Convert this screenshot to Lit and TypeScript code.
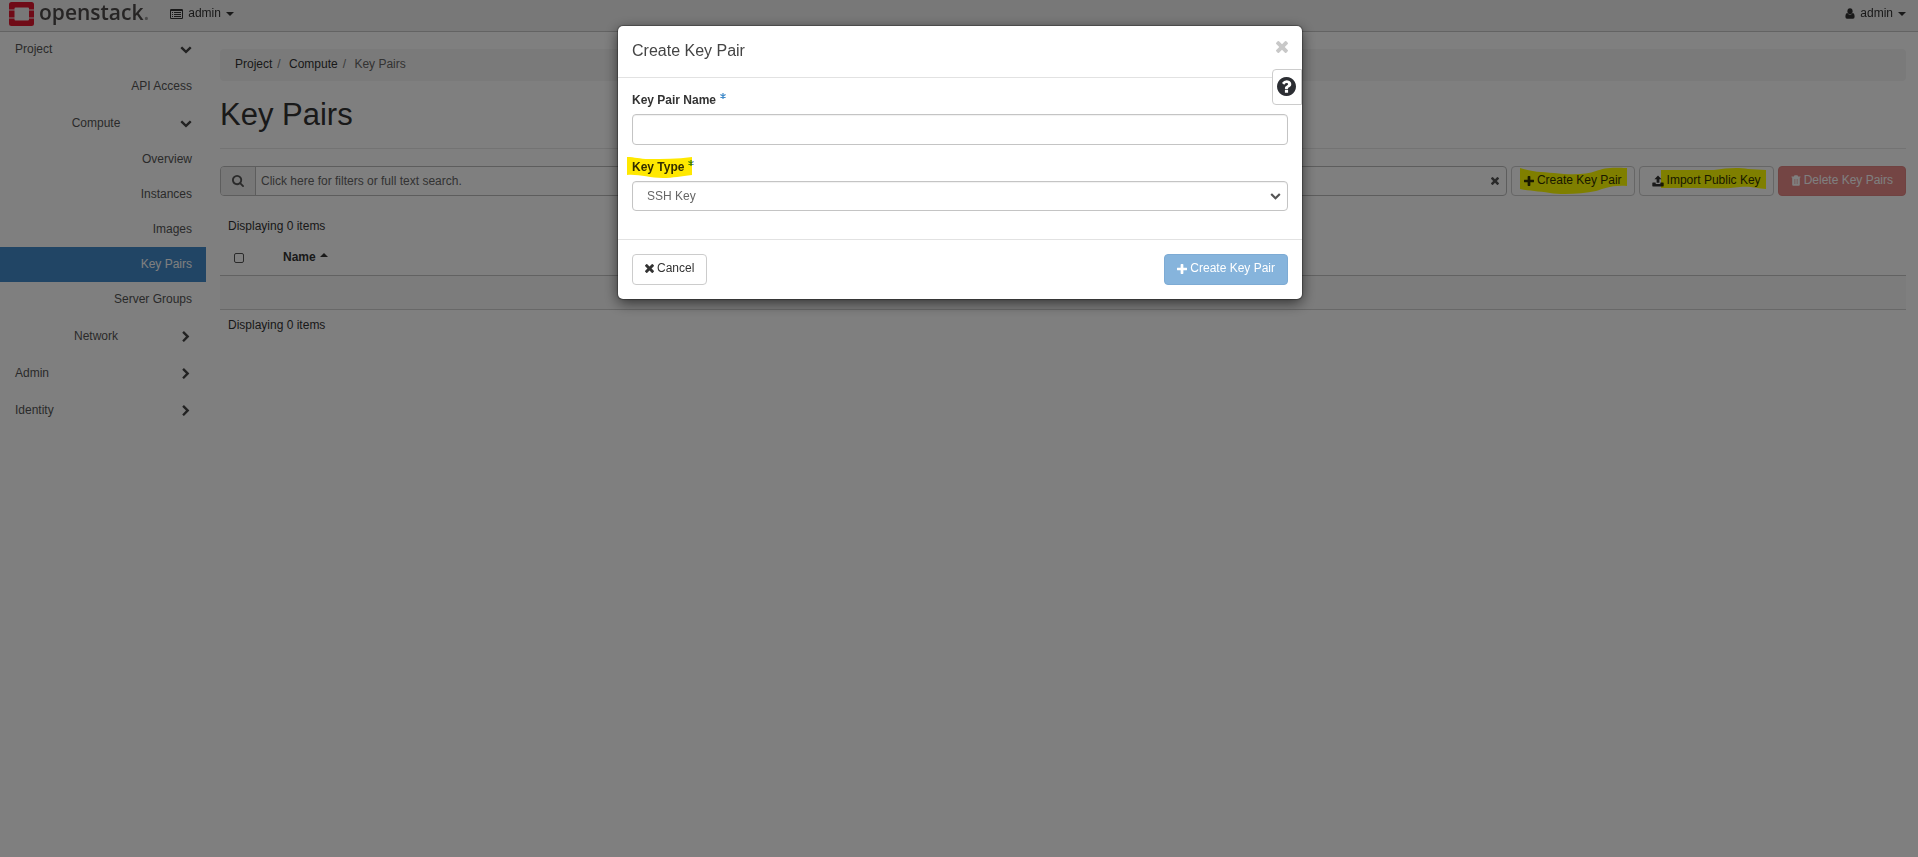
import { LitElement, html, css, svg, nothing } from "lit";
import { customElement, state } from "lit/decorators.js";

const ICONS: Record<string, { box: string; w: number; h: number; art: unknown }> = {
  plus: {
    box: "192 128 1408 1408", w: 10, h: 10,
    art: svg`<path d="M1600 736v192q0 40-28 68t-68 28h-416v416q0 40-28 68t-68 28h-192q-40 0-68-28t-28-68v-416h-416q-40 0-68-28t-28-68v-192q0-40 28-68t68-28h416v-416q0-40 28-68t68-28h192q40 0 68 28t28 68v416h416q40 0 68 28t28 68z"/>`,
  },
  times: {
    box: "302 366 1188 1188", w: 9, h: 9,
    art: svg`<path d="M1490 1322q0 40-28 68l-136 136q-28 28-68 28t-68-28l-294-294-294 294q-28 28-68 28t-68-28l-136-136q-28-28-28-68t28-68l294-294-294-294q-28-28-28-68t28-68l136-136q28-28 68-28t68 28l294 294 294-294q28-28 68-28t68 28l136 136q28 28 28 68t-28 68l-294 294 294 294q28 28 28 68z"/>`,
  },
  search: {
    box: "64 128 1664 1664", w: 12, h: 12,
    art: svg`<path d="M1216 832q0-185-131.500-316.500t-316.500-131.500-316.500 131.500-131.500 316.500 131.500 316.500 316.500 131.500 316.500-131.500 131.500-316.500zm512 832q0 52-38 90t-90 38q-54 0-90-38l-343-342q-179 124-399 124-143 0-273.500-55.500t-225-150-150-225-55.500-273.500 55.500-273.500 150-225 225-150 273.500-55.500 273.500 55.500 225 150 150 225 55.500 273.500q0 220-124 399l343 343q37 37 37 90z"/>`,
  },
  down: {
    box: "0 150 1792 1792", w: 12, h: 12,
    art: svg`<path d="M1683 808l-742 741q-19 19-45 19t-45-19l-742-741q-19-19-19-45.500t19-45.500l166-165q19-19 45-19t45 19l531 531 531-531q19-19 45-19t45 19l166 165q19 19 19 45.500t-19 45.500z"/>`,
  },
  right: {
    box: "0 0 1792 1792", w: 12, h: 12,
    art: svg`<path d="M1363 877l-742 742q-19 19-45 19t-45-19l-166-166q-19-19-19-45t19-45l531-531-531-531q-19-19-19-45t19-45l166-166q19-19 45-19t45 19l742 742q19 19 19 45t-19 45z"/>`,
  },
  question: {
    box: "128 128 1536 1536", w: 19, h: 19,
    art: svg`<path d="M1024 1376v-192q0-14-9-23t-23-9h-192q-14 0-23 9t-9 23v192q0 14 9 23t23 9h192q14 0 23-9t9-23zm256-672q0-88-55.500-163t-138.500-116-170-41q-243 0-371 213-15 24 8 42l132 100q7 6 19 6 16 0 25-12 53-68 86-92 34-24 86-24 48 0 85.500 26t37.500 59q0 38-20 61t-68 45q-63 28-115.500 86.500t-52.500 125.500v36q0 14 9 23t23 9h192q14 0 23-9t9-23q0-19 21.500-49.500t54.500-49.500q32-18 49-28.500t46-35 44.500-48 28-60.500 12.500-81zm384 192q0 209-103 385.500t-279.500 279.500-385.500 103-385.500-103-279.500-279.500-103-385.500 103-385.500 279.500-279.500 385.500-103 385.500 103 279.500 279.500 103 385.500z"/>`,
  },
  upload: {
    box: "0 0 12 12", w: 12, h: 12,
    art: svg`<path d="M6 .4l3.600 3.800H7.400v3.600H4.600V4.200H2.400z"/><path d="M.9 7.600h2.700v.6q0 .8.800.8h3.200q.8 0 .8-.8v-.6h2.700q.6 0 .6.600v2.600q0 .6-.6.600H.9q-.6 0-.6-.6V8.200q0-.6.600-.6z"/>`,
  },
  trash: {
    box: "0 0 9 11", w: 10, h: 11,
    art: svg`<path fill-rule="evenodd" d="M3 .3h3l.6 1.200H9v1H8.300V9.700q0 1-1 1H1.700q-1 0-1-1V2.500H0v-1h2.400zM2.600 4v5h.4V4zM4.300 4v5h.4V4zM6 4v5h.4V4z"/>`,
  },
  user: {
    box: "0 0 10 11", w: 10, h: 11,
    art: svg`<ellipse cx="5" cy="3.200" rx="2.600" ry="3"/><path d="M2.400 5q1 1.700 2.600 1.700T7.600 5Q9.600 5.200 9.600 8.800q0 1.900-1.600 1.900H2Q.4 10.700.4 8.800.4 5.200 2.400 5z"/>`,
  },
  list: {
    box: "0 0 13 10", w: 13, h: 10,
    art: svg`<path fill-rule="evenodd" d="M1.200 0h10.600Q13 0 13 1.200v7.600q0 1.200-1.200 1.200H1.200Q0 10 0 8.800V1.200Q0 0 1.200 0zM1 2v6.700q0 .3.300.3h10.400q.3 0 .3-.3V2z"/><path d="M2 3h1v1H2zM4 3h7v1H4zM2 5h1v1H2zM4 5h7v1H4zM2 7h1v1H2zM4 7h7v1H4z"/>`,
  },
  star: {
    box: "0 0 6 6", w: 6, h: 6,
    art: svg`<path d="M3 0v6M.4 1.500l5.200 3M5.600 1.500l-5.200 3" stroke="currentColor" stroke-width="1.200"/>`,
  },
  caret: { box: "0 0 8 4", w: 8, h: 4, art: svg`<path d="M0 0h8L4 4z"/>` },
  caretUp: { box: "0 0 8 4", w: 8, h: 4, art: svg`<path d="M0 4h8L4 0z"/>` },
};

const icon = (name: string, w?: number, h?: number) => {
  const i = ICONS[name];
  return html`<svg class="icon" aria-hidden="true" width=${w ?? i.w} height=${h ?? w ?? i.h} viewBox=${i.box} fill="currentColor">${i.art}</svg>`;
};

const marker = (w: number, h: number, d: string) =>
  html`<svg class="marker" aria-hidden="true" width=${w} height=${h} viewBox="0 0 ${w} ${h}"><path d=${d} /></svg>`;

const shared = css`
  * { box-sizing: border-box; }
  a { color: inherit; text-decoration: none; }
  button, input, select { font: inherit; color: inherit; margin: 0; }
  .icon { display: block; flex: none; }
  .btn {
    position: relative;
    display: inline-flex;
    align-items: center;
    gap: 3px;
    padding: 5px 12px 7px;
    border: 1px solid #ccc;
    border-radius: 4px;
    background: #fff;
    color: #333;
    white-space: nowrap;
  }
  .marker { position: absolute; top: 0; left: 0; mix-blend-mode: multiply; pointer-events: none; }
`;

@customElement("top-bar")
class TopBar extends LitElement {
  static styles = [shared, css`
    :host { display: block; }
    .bar {
      display: flex;
      align-items: center;
      gap: 21px;
      padding: 1px 12px 5px 9px;
      height: 32px;
      background: #f0f0f0;
      border-bottom: 1px solid #c6c6c6;
      color: #333;
    }
    .brand { display: flex; align-items: flex-start; gap: 5px; }
    .word { font: 600 21px/20px "Open Sans", "Noto Sans", sans-serif; color: #4c4948; }
    .dot { color: #999; }
    .menu { display: flex; align-items: center; gap: 5px; }
    .user { margin-left: auto; }
  `];
  render() {
    return html`<header class="bar">
      <a class="brand" href="#">
        <svg width="25" height="24" viewBox="0 0 25 24" aria-hidden="true" fill="#e0162f">
          <path d="M2.500 0h20Q25 0 25 2.500V7.500H20V6.500Q20 5.500 19 5.500H6.500Q5.500 5.500 5.500 6.500V7.500H0V2.500Q0 0 2.500 0z"/>
          <path d="M0 8.500h5.500v7H0zM20 8.500H25v7h-5z"/>
          <path d="M0 16.500h5.500v1q0 1 1 1H19q1 0 1-1v-1h5v5q0 2.500-2.500 2.500h-20Q0 24 0 21.500z"/>
        </svg>
        <span class="word">openstack<span class="dot">.</span></span>
      </a>
      <a class="menu" href="#">${icon("list")}<span>admin</span>${icon("caret")}</a>
      <a class="menu user" href="#">${icon("user")}<span>admin</span>${icon("caret")}</a>
    </header>`;
  }
}

@customElement("side-nav")
class SideNav extends LitElement {
  static styles = [shared, css`
    :host { display: block; color: #555; }
    ul { list-style: none; margin: 0; padding: 0; }
    .head {
      display: grid;
      grid-template-columns: 1fr auto 1fr;
      align-items: center;
      height: 37px;
      padding-right: 14px;
    }
    .head.top { grid-template-columns: auto 0 1fr; padding-left: 15px; }
    .head .icon { justify-self: end; grid-column: 3; color: #444; }
    .head span { grid-column: 2; }
    .head.top span { grid-column: 1; }
    .link { display: block; padding: 9px 14px; line-height: 17px; text-align: right; }
    .link.tall { padding: 10px 14px; }
    .link.active { background: #428bca; color: #fff; }
    .group { padding-bottom: 1px; }
  `];
  private head(label: string, open: boolean, top = false) {
    return html`<a class="head ${top ? "top" : ""}" href="#"><span>${label}</span>${icon(open ? "down" : "right")}</a>`;
  }
  render() {
    const panels = ["Overview", "Instances", "Images", "Key Pairs", "Server Groups"];
    return html`<nav aria-label="Main"><ul>
      <li>${this.head("Project", true, true)}
        <ul>
          <li><a class="link tall" href="#">API Access</a></li>
          <li>${this.head("Compute", true)}
            <ul class="group">${panels.map((p) => html`<li><a href="#" class="link ${p === "Key Pairs" ? "active" : ""}">${p}</a></li>`)}</ul>
          </li>
          <li>${this.head("Network", false)}</li>
        </ul>
      </li>
      <li>${this.head("Admin", false, true)}</li>
      <li>${this.head("Identity", false, true)}</li>
    </ul></nav>`;
  }
}

@customElement("key-pairs-panel")
class KeyPairsPanel extends LitElement {
  static styles = [shared, css`
    :host { display: block; color: #333; }
    .crumbs { display: flex; list-style: none; margin: 0; padding: 7px 15px 8px; background: #f5f5f5; border-radius: 4px; }
    .crumbs li + li::before { content: "/\\00a0"; padding: 0 5px; color: #777; }
    .crumbs .here { color: #666; }
    h1 { margin: 17px 0; padding-bottom: 16px; border-bottom: 1px solid #e7e7e7; font-size: 31px; font-weight: 400; line-height: 34px; }
    .tools { display: flex; gap: 4px; }
    .tools .btn { padding-bottom: 6px; }
    .search { flex: 1; display: flex; align-items: center; border: 1px solid #bbb; border-radius: 4px; color: #555; }
    .glass { display: flex; align-items: center; align-self: stretch; padding: 0 11px; background: #eee; border-right: 1px solid #bbb; border-radius: 3px 0 0 3px; }
    .search input { flex: 1; min-width: 0; border: 0; padding: 0 5px; background: none; outline: none; }
    .search input::placeholder { color: #666; opacity: 1; }
    .clear { padding: 0 7px; border: 0; background: none; color: #555; }
    .tools .danger { background: #e88b89; border-color: #e08482; color: #fff; }
    .marker { fill: #ff0; }
    .count { margin: 22px 8px 5px; }
    .count.after { margin: 7px 8px; }
    table { width: 100%; border-collapse: separate; border-spacing: 0; }
    th { padding: 9px 0; border-bottom: 1px solid #c4c4c4; text-align: left; }
    .pick { width: 63px; padding-left: 14px; }
    .pick input { display: block; appearance: none; width: 10px; height: 10px; border: 1px solid #555; border-radius: 2px; background: #fff; }
    .sort { display: flex; gap: 4px; }
    .sort .icon { margin-top: 4px; }
    .empty { height: 34px; padding: 0; background: #f9f9f9; border-bottom: 1px solid #d0d0d0; }
  `];
  render() {
    return html`
      <ol class="crumbs"><li><a href="#">Project</a></li><li><a href="#">Compute</a></li><li class="here">Key Pairs</li></ol>
      <h1>Key Pairs</h1>
      <div class="tools">
        <div class="search">
          <span class="glass">${icon("search")}</span>
          <input type="text" aria-label="Filter" placeholder="Click here for filters or full text search." />
          <button class="clear" aria-label="Clear">${icon("times", 8)}</button>
        </div>
        <button class="btn">${icon("plus")}Create Key Pair${marker(124, 29, "M8 1C20 5 30 5 42 6C58 8 74 8 84 4C92 1 98 0 115 1V19C98 18 92 22 84 24C70 27 50 28 38 26C26 24 18 24 8 22z")}</button>
        <button class="btn">${icon("upload")}Import Public Key${marker(135, 29, "M21 3H74C86 1 98 0 108 2L126 3V22C118 22 112 19 100 20C88 22 74 21 60 21H21z")}</button>
        <button class="btn danger">${icon("trash")}Delete Key Pairs</button>
      </div>
      <div class="count">Displaying 0 items</div>
      <table>
        <thead><tr>
          <th class="pick"><input type="checkbox" aria-label="Select all" /></th>
          <th><span class="sort">Name ${icon("caretUp")}</span></th>
        </tr></thead>
        <tbody><tr><td class="empty" colspan="2"></td></tr></tbody>
      </table>
      <div class="count after">Displaying 0 items</div>`;
  }
}

@customElement("create-key-dialog")
class CreateKeyDialog extends LitElement {
  static styles = [shared, css`
    :host { display: block; color: #333; }
    .dialog { position: relative; background: #fff; border-radius: 5px; box-shadow: 0 4px 14px rgba(0, 0, 0, 0.6), 0 0 1px 1px rgba(0, 0, 0, 0.3); }
    header { display: flex; justify-content: space-between; align-items: flex-start; padding: 14px 14px 16px; border-bottom: 1px solid #e2e2e2; }
    h2 { margin: 0; font-size: 16px; line-height: 21px; font-weight: 400; color: #444; }
    .close { padding: 1px 0 0; border: 0; background: none; color: #c8c8c8; }
    .help { position: absolute; top: 43px; right: 0; padding: 7px 5px 8px 4px; border: 1px solid #ccc; border-radius: 4px 0 0 4px; background: #fff; color: #2c2e33; }
    .body { padding: 14px 14px 28px; }
    .field + .field { margin-top: 14px; }
    label { position: relative; display: inline-flex; gap: 4px; font-weight: bold; line-height: 17px; margin-bottom: 5px; }
    label .icon { color: #428bca; margin-top: 1px; }
    .name, select { display: block; width: 100%; height: 31px; border: 1px solid #c4c4c4; border-radius: 4px; background: #fff; box-shadow: inset 0 1px 1px rgba(0, 0, 0, 0.06); padding: 0 14px; outline: none; }
    select { appearance: none; color: #666; height: 30px; }
    .pickbox { display: grid; align-items: center; }
    .pickbox select, .pickbox .icon { grid-area: 1 / 1; }
    .pickbox .icon { justify-self: end; margin-right: 7px; color: #555; pointer-events: none; }
    footer { display: flex; justify-content: space-between; padding: 14px; border-top: 1px solid #e2e2e2; }
    .primary { background: #86b4dc; border-color: #7dabd4; color: #fff; }
    .marker { top: -3px; left: -5px; fill: #ffe800; }
  `];
  render() {
    return html`<section class="dialog" role="dialog" aria-labelledby="title">
      <header><h2 id="title">Create Key Pair</h2><button class="close" aria-label="Close">${icon("times", 12)}</button></header>
      <button class="help" aria-label="Help">${icon("question")}</button>
      <div class="body">
        <div class="field">
          <label for="name">Key Pair Name ${icon("star")}</label>
          <input class="name" id="name" type="text" />
        </div>
        <div class="field">
          <label for="type">Key Type ${icon("star")}${marker(66, 22, "M0 1C8 1 12 3 22 3C36 3 50 3 65 1V19C54 20 46 22 36 22C22 22 12 18 0 19z")}</label>
          <div class="pickbox"><select id="type"><option>SSH Key</option></select>${icon("down", 11)}</div>
        </div>
      </div>
      <footer><button class="btn">${icon("times")}Cancel</button><button class="btn primary">${icon("plus")}Create Key Pair</button></footer>
    </section>`;
  }
}

@customElement("app-root")
class AppRoot extends LitElement {
  @state() private open = true;
  static styles = [shared, css`
    :host { display: block; min-height: 100vh; background: #fff; font: 12px/17px "Liberation Sans", Arial, sans-serif; }
    .top { position: fixed; top: 0; left: 0; right: 0; }
    .page { display: grid; grid-template-columns: 206px minmax(0, 1fr); padding-top: 31px; }
    .main { padding: 18px 12px 0 14px; }
    .backdrop { position: fixed; inset: 0; padding: 26px 12px 26px 14px; background: rgba(0, 0, 0, 0.5); }
    .modal { max-width: 684px; margin: 0 auto; }
  `];
  render() {
    return html`
      <top-bar class="top"></top-bar>
      <div class="page"><side-nav></side-nav><main class="main"><key-pairs-panel></key-pairs-panel></main></div>
      ${this.open ? html`<div class="backdrop"><create-key-dialog class="modal"></create-key-dialog></div>` : nothing}`;
  }
}
